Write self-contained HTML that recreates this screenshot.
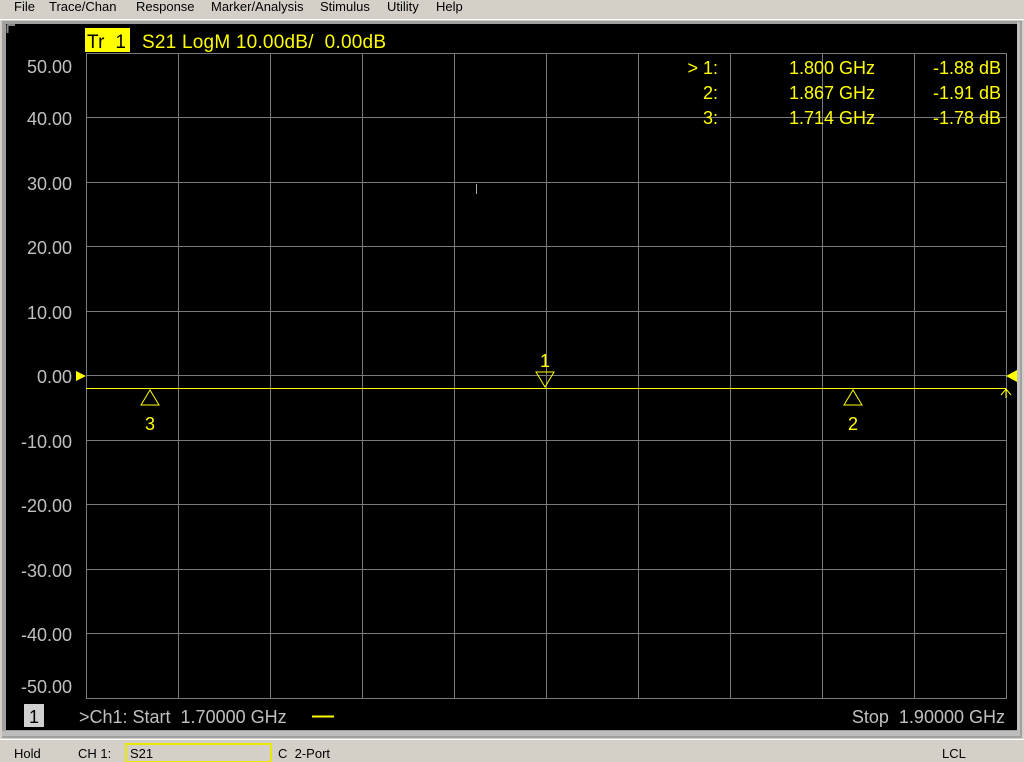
<!DOCTYPE html>
<html><head><style>
html,body{margin:0;padding:0;background:#d4d0c8;width:1024px;height:762px;overflow:hidden}
svg{display:block}
text{font-family:"Liberation Sans",sans-serif;white-space:pre}
</style></head><body>
<svg width="1024" height="762" xmlns="http://www.w3.org/2000/svg" xml:space="preserve">
<rect width="1024" height="762" fill="#d4d0c8"/>
<g font-size="13" fill="#000">
<text x="14" y="11">File</text><text x="49" y="11">Trace/Chan</text><text x="136" y="11">Response</text>
<text x="211" y="11">Marker/Analysis</text><text x="320" y="11">Stimulus</text><text x="387" y="11">Utility</text><text x="436" y="11">Help</text>
</g>
<line x1="0" y1="19.5" x2="1024" y2="19.5" stroke="#fff"/>
<rect x="2" y="21" width="1020" height="717" fill="#a0a0a0"/>
<rect x="6" y="24" width="1011" height="706" fill="#000"/>
<rect x="1017" y="22" width="3" height="714" fill="#c0c0c0"/>
<rect x="2" y="731" width="1018" height="5" fill="#bdbdbd"/>
<line x1="0" y1="739.5" x2="1024" y2="739.5" stroke="#fff"/>
<path d="M7 25 H15 M7.5 25 V33" stroke="#888" stroke-width="2"/>
<g stroke="#7a7a7a" stroke-width="1">
<rect x="86.5" y="53.5" width="920" height="645" fill="none"/>
<path d="M178.5 53V698M270.5 53V698M362.5 53V698M454.5 53V698M546.5 53V698M638.5 53V698M730.5 53V698M822.5 53V698M914.5 53V698"/>
<path d="M86 117.5H1006M86 182.5H1006M86 246.5H1006M86 311.5H1006M86 375.5H1006M86 440.5H1006M86 504.5H1006M86 569.5H1006M86 633.5H1006"/>
</g>
<g font-size="18" fill="#c0c0c0" text-anchor="end">
<text x="72" y="73">50.00</text><text x="72" y="125">40.00</text><text x="72" y="190">30.00</text>
<text x="72" y="254">20.00</text><text x="72" y="319">10.00</text><text x="72" y="383">0.00</text>
<text x="72" y="448">-10.00</text><text x="72" y="512">-20.00</text><text x="72" y="577">-30.00</text>
<text x="72" y="641">-40.00</text><text x="72" y="693">-50.00</text>
</g>
<rect x="85" y="28" width="45" height="24" fill="#ffff00"/>
<text x="87" y="48" font-size="19" fill="#000" textLength="39">Tr  1</text>
<text x="142" y="48" font-size="19" fill="#ffff00" textLength="244">S21 LogM 10.00dB/  0.00dB</text>
<g font-size="18" fill="#ffff00">
<text x="718" y="74" text-anchor="end">&gt; 1:</text><text x="875" y="74" text-anchor="end">1.800 GHz</text><text x="1001" y="74" text-anchor="end">-1.88 dB</text>
<text x="718" y="99" text-anchor="end">2:</text><text x="875" y="99" text-anchor="end">1.867 GHz</text><text x="1001" y="99" text-anchor="end">-1.91 dB</text>
<text x="718" y="124" text-anchor="end">3:</text><text x="875" y="124" text-anchor="end">1.714 GHz</text><text x="1001" y="124" text-anchor="end">-1.78 dB</text>
</g>
<line x1="476.5" y1="184" x2="476.5" y2="194" stroke="#aaa"/>
<line x1="86" y1="388.5" x2="1006" y2="388.5" stroke="#ffff00"/>
<path d="M76 371 L86 376 L76 381Z" fill="#ffff00"/>
<path d="M1017 370 L1006 376 L1017 382Z" fill="#ffff00"/>
<path d="M1001 395 L1006 389 L1011 395 M1006 389 V398" stroke="#ffff00" fill="none"/>
<path d="M536 372 H554 L545 387Z" fill="none" stroke="#ffff00"/>
<text x="545" y="367" font-size="18" fill="#ffff00" text-anchor="middle">1</text>
<path d="M141 405 H159 L150 390Z" fill="none" stroke="#ffff00"/>
<text x="150" y="430" font-size="18" fill="#ffff00" text-anchor="middle">3</text>
<path d="M844 405 H862 L853 390Z" fill="none" stroke="#ffff00"/>
<text x="853" y="430" font-size="18" fill="#ffff00" text-anchor="middle">2</text>
<rect x="24" y="704" width="20" height="23" fill="#d0d0d0"/>
<text x="34" y="723" font-size="18" fill="#000" text-anchor="middle">1</text>
<text x="79" y="723" font-size="18" fill="#c0c0c0">&gt;Ch1: Start  1.70000 GHz</text>
<line x1="312" y1="716.5" x2="334" y2="716.5" stroke="#ffff00" stroke-width="2"/>
<text x="1005" y="723" font-size="18" fill="#c0c0c0" text-anchor="end">Stop  1.90000 GHz</text>
<g font-size="13" fill="#000">
<text x="14" y="758">Hold</text><text x="78" y="758">CH 1:</text>
<text x="130" y="758">S21</text><text x="278" y="758">C  2-Port</text><text x="942" y="758">LCL</text>
</g>
<rect x="126" y="744" width="145" height="18" fill="none" stroke="#e8e800" stroke-width="2"/>
</svg>
</body></html>
